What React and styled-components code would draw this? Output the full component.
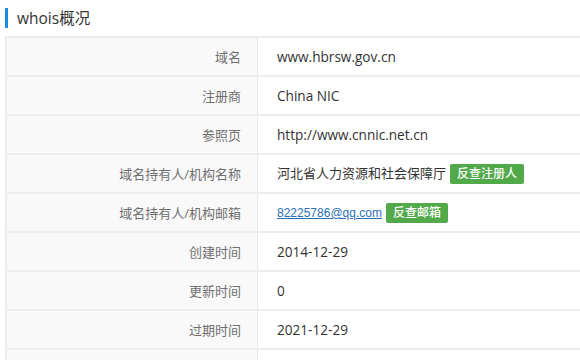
import React from 'react';
import styled, { createGlobalStyle } from 'styled-components';

const GlobalStyle = createGlobalStyle`
  html, body {
    margin: 0;
    padding: 0;
    background: #fff;
    overflow: hidden;
  }
  body {
    font-family: "Open Sans", "Noto Sans CJK SC", sans-serif;
  }
`;

const rows = [
  { label: '域名', value: 'www.hbrsw.gov.cn' },
  { label: '注册商', value: 'China NIC' },
  { label: '参照页', value: 'http://www.cnnic.net.cn' },
  { label: '域名持有人/机构名称', value: '河北省人力资源和社会保障厅', cjk: true, button: '反查注册人' },
  { label: '域名持有人/机构邮箱', link: '82225786@qq.com', button: '反查邮箱' },
  { label: '创建时间', value: '2014-12-29' },
  { label: '更新时间', value: '0' },
  { label: '过期时间', value: '2021-12-29' },
];

function App() {
  return (
    <Wrapper>
      <GlobalStyle />
      <Title>whois概况</Title>
      <Table>
        <tbody>
          {rows.map((row) => (
            <Row key={row.label}>
              <Label>{row.label}</Label>
              <Value>
                {row.value && <Text $cjk={row.cjk}>{row.value}</Text>}
                {row.link && <Mail href="#">{row.link}</Mail>}
                {row.button && <GreenButton>{row.button}</GreenButton>}
              </Value>
            </Row>
          ))}
          <Row>
            <Label />
            <Value />
          </Row>
        </tbody>
      </Table>
    </Wrapper>
  );
}

const Wrapper = styled.div`
  box-sizing: border-box;
  width: 580px;
  height: 360px;
  overflow: hidden;
  padding: 8px 0 0 5px;
`;

const Title = styled.h2`
  margin: 0 0 8px 0;
  height: 20px;
  display: flex;
  align-items: center;
  border-left: 3px solid #1a8bd6;
  border-radius: 1px;
  padding-left: 9px;
  font-size: 15.5px;
  font-weight: normal;
  color: #333;
  line-height: 20px;
`;

const Table = styled.table`
  width: 600px;
  border-collapse: collapse;
  border-left: 2px solid #ececec;
  border-top: 2px solid #ececec;
`;

const Row = styled.tr`
  height: 39px;
  border-bottom: 2px solid #ededed;
`;

const Label = styled.td`
  width: 234px;
  padding: 0 16px 0 0;
  background: #f9f9f9;
  border-right: 1px solid #e8e8e8;
  text-align: right;
  font-size: 13px;
  color: #6f6f6f;
  vertical-align: middle;
`;

const Value = styled.td`
  padding: 0 0 0 19px;
  font-size: 14px;
  color: #333;
  vertical-align: middle;
  white-space: nowrap;
`;

const Text = styled.span`
  font-size: ${(p) => (p.$cjk ? '13px' : '13.6px')};
`;

const Mail = styled.a`
  font-family: "Liberation Sans", Arial, sans-serif;
  font-size: 12px;
  color: #2a6fb5;
  text-decoration: underline;
`;

const GreenButton = styled.span`
  display: inline-block;
  margin-left: 4px;
  padding: 0 7px;
  height: 20px;
  line-height: 20px;
  background: #52a94a;
  border-radius: 2px;
  color: #fff;
  font-size: 12px;
  font-weight: 500;
  vertical-align: middle;
`;

export default App;
